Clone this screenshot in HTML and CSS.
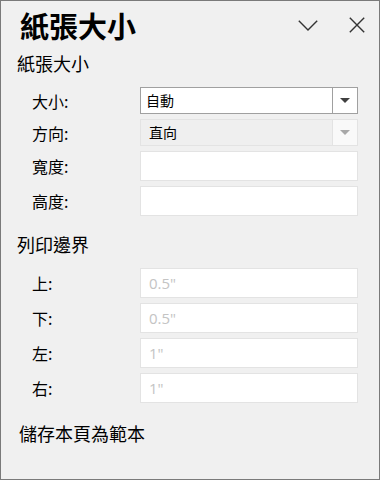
FILE: index.html
```html
<!DOCTYPE html>
<html>

<head>
	<meta charset="utf-8">
	<meta name="viewport" content="width=device-width, initial-scale=1">
	<title>紙張大小</title>
	<link rel="stylesheet" href="styles.css">
</head>

<body>
	<div class="pane">
		<div class="pane_head">
			<h1>紙張大小</h1>
			<span class="head_btn chevron">
				<svg width="20" height="11" viewBox="0 0 20 11">
					<polyline points="0.8,0.8 10,10 19.2,0.8" fill="none" stroke="#333" stroke-width="1.4" />
				</svg>
			</span>
			<span class="head_btn close">
				<svg width="16" height="16" viewBox="0 0 16 16">
					<path d="M0.8 0.8 L15.2 15.2 M15.2 0.8 L0.8 15.2" fill="none" stroke="#333" stroke-width="1.4" />
				</svg>
			</span>
		</div>

		<h2>紙張大小</h2>
		<div class="form">
			<label>大小:</label>
			<div class="select">
				<span class="value">自動</span>
				<span class="drop"><span class="tri"></span></span>
			</div>

			<label>方向:</label>
			<div class="select disabled">
				<span class="value">直向</span>
				<span class="drop"><span class="tri"></span></span>
			</div>

			<label>寬度:</label>
			<div class="input"></div>

			<label>高度:</label>
			<div class="input"></div>
		</div>

		<h2>列印邊界</h2>
		<div class="form">
			<label>上:</label>
			<div class="input"><span class="hint">0.5"</span></div>

			<label>下:</label>
			<div class="input"><span class="hint">0.5"</span></div>

			<label>左:</label>
			<div class="input"><span class="hint">1"</span></div>

			<label>右:</label>
			<div class="input"><span class="hint">1"</span></div>
		</div>

		<div class="save">儲存本頁為範本</div>
	</div>
</body>

</html>
```

FILE: styles.css
```css
body {
	margin: 0;
	background-color: #F0F0F0;
	color: #000000;
	font-family: "Noto Sans CJK TC", "Noto Sans", sans-serif;
}

.pane {
	box-sizing: border-box;
	width: 380px;
	height: 480px;
	border: 1px solid #7A7A7A;
	background-color: #F0F0F0;
}

.pane_head {
	display: flex;
	align-items: center;
	height: 48px;
	padding: 0 14px 0 19px;
}

h1 {
	margin: 0;
	font-size: 29px;
	line-height: 34px;
	font-weight: bold;
	flex: 1;
}

.head_btn {
	display: flex;
}

.chevron {
	margin-right: 31px;
}

h2 {
	margin: 2px 0 0 16px;
	font-size: 18px;
	line-height: 24px;
	font-weight: normal;
}

/* label column + field column */
.form {
	display: grid;
	grid-template-columns: 108px 218px;
	row-gap: 5px;
	margin: 12px 0 0 31px;
	align-items: center;
}

.form label {
	font-size: 16px;
	line-height: 20px;
}

.select {
	box-sizing: border-box;
	display: flex;
	height: 27px;
	border: 1px solid #A0A0A0;
	background-color: #FFFFFF;
}

.select .value {
	flex: 1;
	padding-left: 5px;
	font-size: 14px;
	line-height: 25px;
}

.select .drop {
	width: 24px;
	border-left: 1px solid #A0A0A0;
	display: flex;
	align-items: center;
	justify-content: center;
}

.tri {
	width: 0;
	height: 0;
	border-left: 5px solid transparent;
	border-right: 5px solid transparent;
	border-top: 5px solid #404040;
}

.select.disabled {
	border-color: #E3E3E3;
	background-color: #EFEFEF;
}

.select.disabled .value {
	padding-left: 8px;
}

.select.disabled .drop {
	border-left-color: #E3E3E3;
	background-color: #F9F9F9;
}

.select.disabled .tri {
	border-top-color: #A8A8A8;
}

.input {
	box-sizing: border-box;
	height: 30px;
	border: 1px solid #E3E3E3;
	background-color: #FFFFFF;
	padding-left: 8px;
}

.hint {
	font-family: "Open Sans", "Noto Sans", sans-serif;
	font-size: 15px;
	line-height: 28px;
	color: #C4C4C4;
}

.form + h2 {
	margin-top: 16px;
}

.save {
	margin: 18px 0 0 18px;
	font-size: 18px;
	line-height: 24px;
}
```
